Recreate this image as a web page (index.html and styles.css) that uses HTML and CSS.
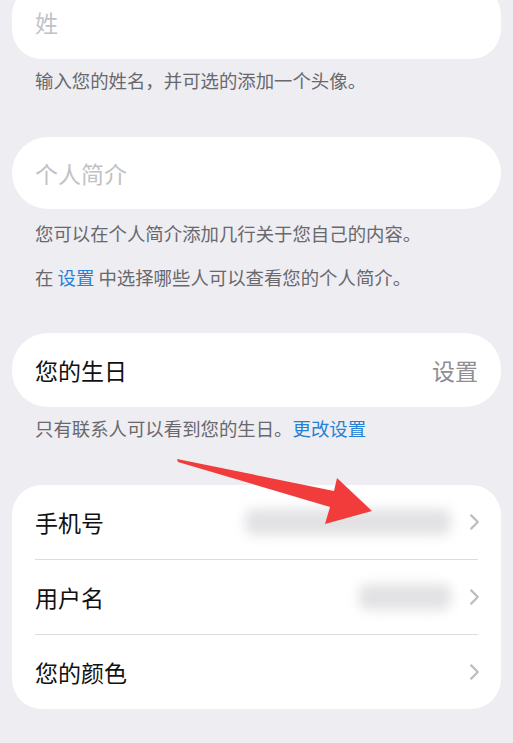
FILE: index.html
```html
<!DOCTYPE html>
<html lang="zh-CN">
<head>
  <meta charset="UTF-8" />
  <meta name="viewport" content="width=device-width, initial-scale=1.0"/>
  <title>编辑资料</title>
  <link rel="stylesheet" href="styles.css">
</head>
<body>
  <div class="page">
    <div class="card field first">
      <span class="placeholder">姓</span>
    </div>
    <p class="note note-first">输入您的姓名，并可选的添加一个头像。</p>

    <div class="card field">
      <span class="placeholder">个人简介</span>
    </div>
    <p class="note">您可以在个人简介添加几行关于您自己的内容。</p>
    <p class="note note-second">在 <a class="link">设置</a> 中选择哪些人可以查看您的个人简介。</p>

    <div class="card field row">
      <span class="label">您的生日</span>
      <span class="value">设置</span>
    </div>
    <p class="note note-tight">只有联系人可以看到您的生日。<a class="link">更改设置</a></p>

    <div class="card list">
      <div class="item">
        <span class="label">手机号</span>
        <span class="masked phone"></span>
        <svg class="chevron" viewBox="0 0 10 16"><path d="M2 2 L8 8 L2 14"/></svg>
      </div>
      <div class="item">
        <span class="label">用户名</span>
        <span class="masked user"></span>
        <svg class="chevron" viewBox="0 0 10 16"><path d="M2 2 L8 8 L2 14"/></svg>
      </div>
      <div class="item">
        <span class="label">您的颜色</span>
        <svg class="chevron" viewBox="0 0 10 16"><path d="M2 2 L8 8 L2 14"/></svg>
      </div>
    </div>
  </div>

  <!-- annotation arrow drawn over the screenshot -->
  <svg class="arrow" viewBox="0 0 513 743">
    <polygon points="177,459 334,491 337,478 372,511 325,524 330,507 178,462"/>
  </svg>
</body>
</html>
```

FILE: styles.css
```css
body {
  margin: 0;
  background-color: #eeedf2;
  font-family: "Noto Sans CJK SC", "Noto Sans", sans-serif;
  color: #111;
  overflow: hidden;
}

.page {
  padding: 0 12px 40px;
}

.card {
  background-color: #fff;
  border-radius: 36px;
}

.field {
  height: 72px;
  display: flex;
  align-items: center;
  padding: 0 23px;
  font-size: 23px;
}

.field.first {
  margin-top: -15px;
  height: 74px;
  border-radius: 30px;
}

.placeholder {
  color: #c2c2c6;
}

.row {
  justify-content: space-between;
  height: 74px;
}

.value {
  color: #8e8e93;
}

.note {
  margin: 12px 23px 44px;
  font-size: 18.4px;
  line-height: 24px;
  color: #68686d;
}

.note-first {
  margin-top: 9px;
  margin-bottom: 45px;
}

.note + .note-second {
  margin-top: -24px;
}

.note-tight {
  margin-top: 9px;
  margin-bottom: 45px;
}

.link {
  color: #2481d6;
}

.list {
  border-radius: 30px;
  padding: 0 23px;
}

.item {
  height: 74px;
  display: flex;
  align-items: center;
  font-size: 23px;
  border-bottom: 1px solid #dcdce0;
}

.item:last-child {
  border-bottom: none;
}

.item .label {
  flex: 1;
}

.masked {
  height: 26px;
  background-color: #e2e2e5;
  border-radius: 8px;
  filter: blur(6px);
  margin-right: 18px;
}

.masked.phone {
  width: 206px;
}

.masked.user {
  width: 92px;
}

.chevron {
  width: 11px;
  height: 18px;
  fill: none;
  stroke: #bdbdc1;
  stroke-width: 2;
  stroke-linecap: round;
  stroke-linejoin: round;
  margin-right: -2px;
}

.arrow {
  position: absolute;
  left: 0;
  top: 0;
  width: 513px;
  height: 743px;
  pointer-events: none;
}

.arrow polygon {
  fill: #f23b3b;
}
```
